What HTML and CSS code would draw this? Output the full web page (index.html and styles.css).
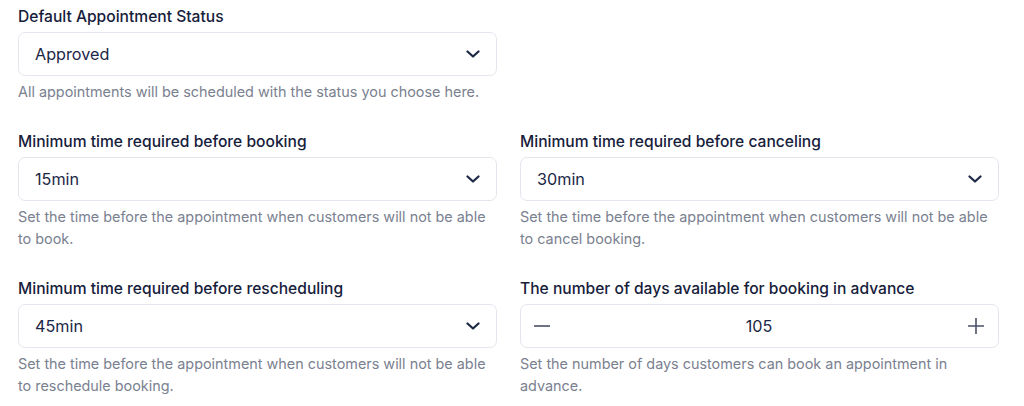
FILE: index.html
```html
<!DOCTYPE html>
<html lang="en">
<head>
  <meta charset="UTF-8">
  <title>Appointment Settings</title>
  <link rel="stylesheet" href="styles.css">
</head>
<body>
  <div class="settings">
    <div class="field">
      <label class="field-label">Default Appointment Status</label>
      <div class="select-box">
        <span>Approved</span>
        <svg class="chevron" viewBox="0 0 14 8"><path d="M1.5 1.5l5.5 5 5.5-5"/></svg>
      </div>
      <p class="hint">All appointments will be scheduled with the status you choose here.</p>
    </div>
    <div class="field"></div>

    <div class="field">
      <label class="field-label">Minimum time required before booking</label>
      <div class="select-box">
        <span>15min</span>
        <svg class="chevron" viewBox="0 0 14 8"><path d="M1.5 1.5l5.5 5 5.5-5"/></svg>
      </div>
      <p class="hint">Set the time before the appointment when customers will not be able to book.</p>
    </div>
    <div class="field">
      <label class="field-label">Minimum time required before canceling</label>
      <div class="select-box">
        <span>30min</span>
        <svg class="chevron" viewBox="0 0 14 8"><path d="M1.5 1.5l5.5 5 5.5-5"/></svg>
      </div>
      <p class="hint">Set the time before the appointment when customers will not be able to cancel booking.</p>
    </div>

    <div class="field">
      <label class="field-label">Minimum time required before rescheduling</label>
      <div class="select-box">
        <span>45min</span>
        <svg class="chevron" viewBox="0 0 14 8"><path d="M1.5 1.5l5.5 5 5.5-5"/></svg>
      </div>
      <p class="hint">Set the time before the appointment when customers will not be able to reschedule booking.</p>
    </div>
    <div class="field">
      <label class="field-label">The number of days available for booking in advance</label>
      <div class="stepper">
        <svg class="step-icon" viewBox="0 0 18 18"><path d="M1 9h16"/></svg>
        <span class="step-value">105</span>
        <svg class="step-icon" viewBox="0 0 18 18"><path d="M1 9h16M9 1v16"/></svg>
      </div>
      <p class="hint">Set the number of days customers can book an appointment in advance.</p>
    </div>
  </div>
</body>
</html>
```

FILE: styles.css
```css
body {
  margin: 0;
  background: #ffffff;
  font-family: Inter, "Noto Sans", sans-serif;
}
.settings {
  display: grid;
  grid-template-columns: 479px 479px;
  column-gap: 23px;
  row-gap: 28px;
  padding: 6px 0 0 18px;
}
.field-label {
  display: block;
  font-size: 15.6px;
  font-weight: 500;
  line-height: 22px;
  color: #16203b;
}
.select-box,
.stepper {
  box-sizing: border-box;
  height: 44px;
  margin-top: 4px;
  border: 1px solid #e3e6ec;
  border-radius: 7px;
  display: flex;
  align-items: center;
  padding: 0 16px;
  font-size: 16.2px;
  color: #1c2746;
}
.select-box {
  justify-content: space-between;
}
.chevron {
  width: 14px;
  height: 8px;
  fill: none;
  stroke: #1c2746;
  stroke-width: 2.2;
  stroke-linecap: round;
  stroke-linejoin: round;
}
.stepper {
  justify-content: space-between;
  padding: 0 13px 0 12px;
}
.step-icon {
  width: 18px;
  height: 18px;
  fill: none;
  stroke: #4a5268;
  stroke-width: 1.6;
}
.step-value {
  flex: 1;
  text-align: center;
}
.hint {
  margin: 5px 0 0;
  font-size: 14.4px;
  line-height: 22px;
  color: #7a8190;
}
```
